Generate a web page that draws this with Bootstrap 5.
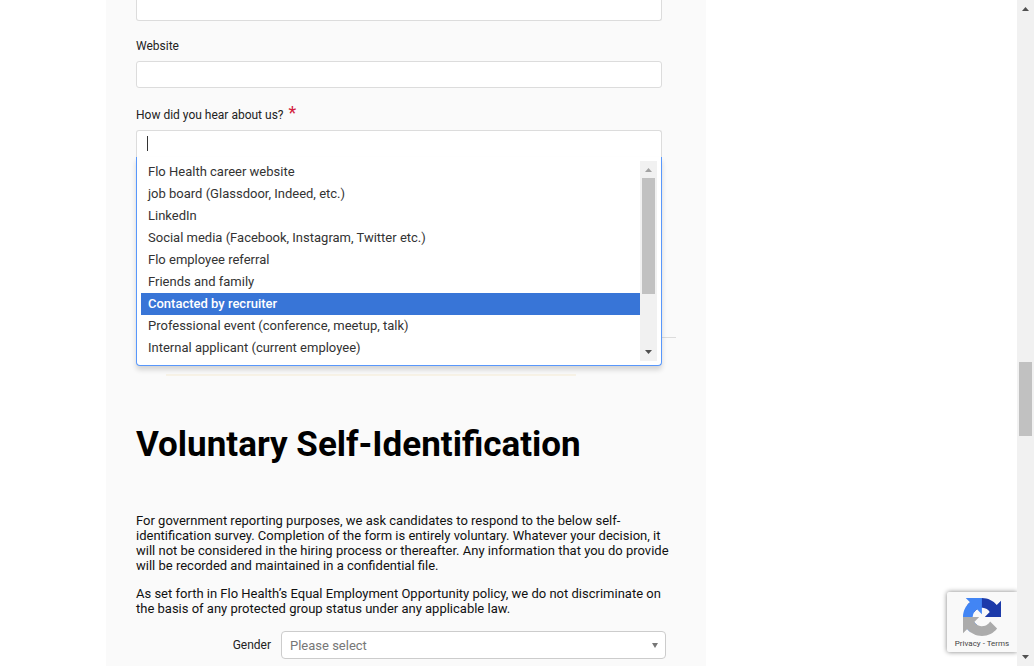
<!DOCTYPE html>
<html lang="en">
<head>
<meta charset="utf-8">
<meta name="viewport" content="width=device-width, initial-scale=1">
<title>Flo Health – Application</title>
<link href="https://cdn.jsdelivr.net/npm/bootstrap@5.3.0/dist/css/bootstrap.min.css" rel="stylesheet">
<style>
  body { font-family: Roboto, "Liberation Sans", sans-serif; font-size: 13px; line-height: 15px; color: #222; background: #fff; }
  .page-view { min-width: 0; }
  .apply-panel { max-width: 600px; margin-left: 106px; padding: 0 30px; background: #fafafa; }
  .field-group { margin-right: 14px; }
  .field-group + .field-group { padding-top: 17px; }
  .field-group label { font-size: 12px; line-height: 16px; margin-bottom: 7px; }
  .field-box { display: block; width: 100%; height: 27px; border: 1px solid #dcdcdc; border-radius: 3px; background: #fff; padding: 0 10px; outline: 0; }
  .field-cut { height: 21px; border-top: 0; border-radius: 0 0 3px 3px; }
  .field-open { border-bottom: 0; border-radius: 3px 3px 0 0; }
  .required-mark { color: #d3203e; font-size: 18px; line-height: 16px; margin-left: 2px; }
  .text-caret { left: 11px; top: 6px; width: 1px; height: 15px; background: #333; }
  .option-menu { top: 27px; border: 1px solid #5897fb; border-top: 0; border-radius: 0 0 4px 4px; padding: 4px; box-shadow: 0 4px 5px rgba(0,0,0,.15); z-index: 5; }
  .option-list { height: 200px; min-width: 0; }
  .option-list button { height: 22px; padding: 0 7px; border: 0; background: #fff; color: #333; text-align: left; line-height: 22px; }
  .option-list button.chosen { background: #3875d7; color: #fff; font-weight: 500; }
  .scroll-track { width: 17px; background: #f1f1f1; }
  .scroll-track svg { display: block; width: 17px; height: 17px; flex: none; }
  .scroll-thumb { width: 13px; background: #c1c1c1; }
  .menu-thumb { height: 116px; }
  .form-rule { height: 1px; background: #dcdcdc; margin-top: 180px; }
  .accent-rule { height: 2px; background: #f7f2e6; margin: 36px 100px 49px 30px; }
  .section-title { font-size: 35px; line-height: 40px; font-weight: 700; color: #000; margin-bottom: 48px; }
  .survey-note { color: #111; margin-bottom: 13px; }
  .gender-row { padding: 2px 10px 0 0; }
  .gender-row label { width: 135px; margin-right: 10px; font-size: 12px; }
  .gender-pick { height: 28px; border: 1px solid #ccc; border-radius: 4px; background: #fff; color: #777; padding: 0 8px; appearance: none; min-width: 0; }
  .pick-arrow { right: 8px; top: 12px; width: 6px; height: 5px; }
  .captcha-badge { right: 0; bottom: 14px; width: 70px; height: 60px; background: #f9f9f9; border-radius: 2px 0 0 2px; box-shadow: 0 0 5px gray; padding-top: 6px; }
  .captcha-badge svg { width: 38px; height: 38px; }
  .captcha-links { font-size: 8px; line-height: 10px; margin-top: 3px; color: #444; }
  .captcha-links a { color: #444; text-decoration: none; }
</style>
</head>
<body>
<div class="d-flex vh-100 overflow-hidden">
  <div class="page-view flex-grow-1 position-relative overflow-hidden">
    <main class="apply-panel min-vh-100">
      <form>
        <div class="field-group">
          <input class="field-box field-cut" type="text" aria-label="Profile link">
        </div>
        <div class="field-group">
          <label class="d-block" for="website">Website</label>
          <input class="field-box" id="website" type="text">
        </div>
        <div class="field-group">
          <label class="d-block" for="source">How did you hear about us? <span class="required-mark">*</span></label>
          <div class="position-relative">
            <input class="field-box field-open" id="source" type="text" autocomplete="off">
            <span class="text-caret position-absolute"></span>
            <div class="option-menu position-absolute start-0 end-0 bg-white d-flex">
              <div class="option-list d-flex flex-column flex-grow-1">
                <button type="button">Flo Health career website</button>
                <button type="button">job board (Glassdoor, Indeed, etc.)</button>
                <button type="button">LinkedIn</button>
                <button type="button">Social media (Facebook, Instagram, Twitter etc.)</button>
                <button type="button">Flo employee referral</button>
                <button type="button">Friends and family</button>
                <button type="button" class="chosen">Contacted by recruiter</button>
                <button type="button">Professional event (conference, meetup, talk)</button>
                <button type="button">Internal applicant (current employee)</button>
              </div>
              <div class="scroll-track d-flex flex-column align-items-center">
                <svg viewBox="0 0 17 17"><path d="M5 11h7L8.500 7z" fill="#a3a3a3"/></svg>
                <div class="scroll-thumb menu-thumb"></div>
                <svg class="mt-auto" viewBox="0 0 17 17"><path d="M5 6h7L8.500 10z" fill="#505050"/></svg>
              </div>
            </div>
          </div>
        </div>
        <div class="form-rule"></div>
        <div class="accent-rule"></div>
        <h1 class="section-title">Voluntary Self-Identification</h1>
        <p class="survey-note">For government reporting purposes, we ask candidates to respond to the below self-identification survey. Completion of the form is entirely voluntary. Whatever your decision, it will not be considered in the hiring process or thereafter. Any information that you do provide will be recorded and maintained in a confidential file.</p>
        <p class="survey-note">As set forth in Flo Health’s Equal Employment Opportunity policy, we do not discriminate on the basis of any protected group status under any applicable law.</p>
        <div class="gender-row d-flex align-items-center">
          <label class="text-end" for="gender">Gender</label>
          <div class="position-relative flex-grow-1 d-flex">
            <select class="gender-pick w-100" id="gender"><option>Please select</option></select>
            <svg class="pick-arrow position-absolute" viewBox="0 0 6 5"><path d="M0 0h6L3 5z" fill="#777"/></svg>
          </div>
        </div>
      </form>
    </main>
    <aside class="captcha-badge position-absolute text-center">
      <svg class="d-block mx-auto" viewBox="0 0 64 64" aria-label="reCAPTCHA">
        <path d="M64 31.955l-.033-1.370V4.687l-7.160 7.160C50.948 4.674 42.033.093 32.050.093c-10.400 0-19.622 4.960-25.458 12.640l11.736 11.860a15.550 15.550 0 0 1 4.754-5.334c2.050-1.600 4.952-2.906 8.968-2.906.485 0 .860.057 1.135.163 4.976.393 9.288 3.140 11.828 7.124l-8.307 8.307L64 31.953" fill="#1c3aa9"/>
        <path d="M31.862.094l-1.370.033H4.594l7.160 7.160C4.580 13.147 0 22.060 0 32.046c0 10.400 4.960 19.622 12.640 25.458L24.500 45.768a15.550 15.550 0 0 1-5.334-4.754c-1.600-2.050-2.906-4.952-2.906-8.968 0-.485.057-.860.163-1.135.393-4.976 3.140-9.288 7.124-11.828l8.307 8.307L31.860.095" fill="#4285f4"/>
        <path d="M.001 32.045l.033 1.370v25.898l7.160-7.160c5.860 7.173 14.774 11.754 24.760 11.754 10.400 0 19.622-4.960 25.458-12.640l-11.736-11.860a15.550 15.550 0 0 1-4.754 5.334c-2.050 1.600-4.952 2.906-8.968 2.906-.485 0-.860-.057-1.135-.163-4.976-.393-9.288-3.140-11.828-7.124l8.307-8.307c-10.522.040-22.400.066-27.295-.005" fill="#ababab"/>
      </svg>
      <div class="captcha-links"><a href="#">Privacy</a> - <a href="#">Terms</a></div>
    </aside>
  </div>
  <div class="scroll-track d-flex flex-column align-items-center flex-shrink-0">
    <svg viewBox="0 0 17 17"><path d="M5 11h7L8.500 7z" fill="#505050"/></svg>
    <div class="flex-grow-1 w-100 d-flex flex-column align-items-center">
      <div style="height:54.600%"></div>
      <div class="scroll-thumb" style="height:11.700%"></div>
    </div>
    <svg viewBox="0 0 17 17"><path d="M5 6h7L8.500 10z" fill="#505050"/></svg>
  </div>
</div>
<script src="https://cdn.jsdelivr.net/npm/bootstrap@5.3.0/dist/js/bootstrap.bundle.min.js"></script>
</body>
</html>
